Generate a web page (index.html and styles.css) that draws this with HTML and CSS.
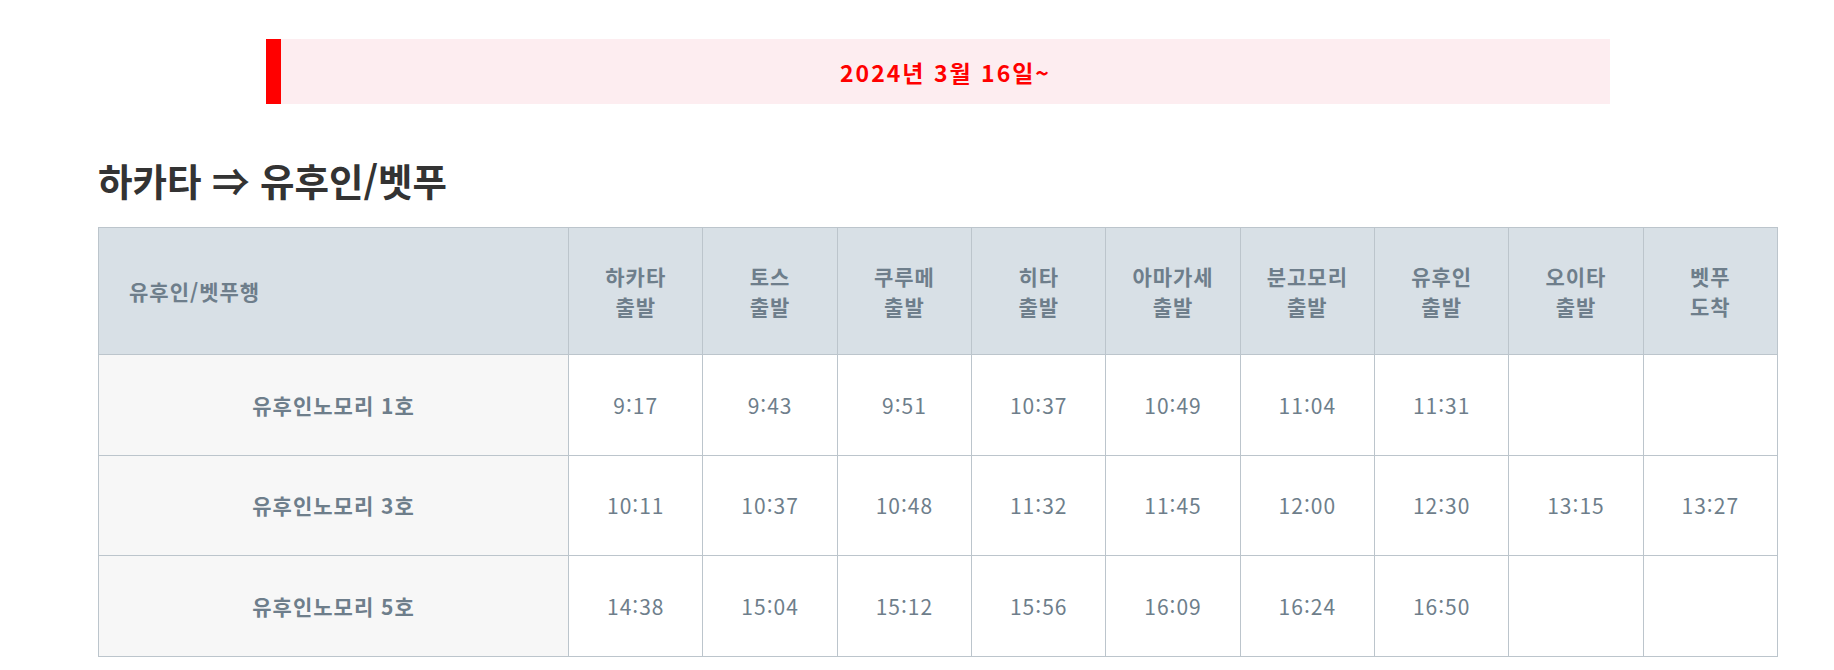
FILE: index.html
```html
<!DOCTYPE html>
<html lang="ko">
  <head>
    <meta charset="UTF-8" />
    <meta name="viewport" content="width=device-width, initial-scale=1.0" />
    <title>유후인노모리 시간표</title>
    <link rel="stylesheet" href="styles.css">
  </head>
  <body>
    <div class="container">
      <div class="notice">2024년 3월 16일~</div>

      <h2 class="route-title">하카타 ⇒ 유후인/벳푸</h2>

      <table class="timetable">
        <colgroup>
          <col class="col-train" />
          <col span="9" class="col-stop" />
        </colgroup>
        <thead>
          <tr>
            <th class="head-train">유후인/벳푸행</th>
            <th>하카타<br />출발</th>
            <th>토스<br />출발</th>
            <th>쿠루메<br />출발</th>
            <th>히타<br />출발</th>
            <th>아마가세<br />출발</th>
            <th>분고모리<br />출발</th>
            <th>유후인<br />출발</th>
            <th>오이타<br />출발</th>
            <th>벳푸<br />도착</th>
          </tr>
        </thead>
        <tbody>
          <tr>
            <td class="train-name">유후인노모리 1호</td>
            <td>9:17</td>
            <td>9:43</td>
            <td>9:51</td>
            <td>10:37</td>
            <td>10:49</td>
            <td>11:04</td>
            <td>11:31</td>
            <td></td>
            <td></td>
          </tr>
          <tr>
            <td class="train-name">유후인노모리 3호</td>
            <td>10:11</td>
            <td>10:37</td>
            <td>10:48</td>
            <td>11:32</td>
            <td>11:45</td>
            <td>12:00</td>
            <td>12:30</td>
            <td>13:15</td>
            <td>13:27</td>
          </tr>
          <tr>
            <td class="train-name">유후인노모리 5호</td>
            <td>14:38</td>
            <td>15:04</td>
            <td>15:12</td>
            <td>15:56</td>
            <td>16:09</td>
            <td>16:24</td>
            <td>16:50</td>
            <td></td>
            <td></td>
          </tr>
        </tbody>
      </table>
    </div>
  </body>
</html>
```

FILE: styles.css
```css
body {
  margin: 0;
  padding: 0;
  font-family: "Noto Sans CJK KR", "Noto Sans", sans-serif;
  background: #fff;
  color: #333;
}

.container {
  width: 1680px;
  margin-left: 98px;
  padding-top: 39px;
}

.notice {
  width: 80%;
  height: 65px;
  margin: 0 auto;
  box-sizing: border-box;
  display: flex;
  justify-content: center;
  align-items: center;
  background: #fdedf0;
  border-left: 15px solid #ff0000;
  color: #ff0000;
  font-size: 23px;
  font-weight: bold;
  letter-spacing: 2px;
}

.route-title {
  margin: 0;
  padding: 53px 0 25px;
  font-size: 37.5px;
  line-height: 1.2;
  font-weight: bold;
  color: #333;
}

.timetable {
  width: 100%;
  border-collapse: collapse;
  table-layout: fixed;
  border: 1px solid #bcc5cc;
}

.col-train {
  width: 28%;
}

.col-stop {
  width: 8%;
}

.timetable th,
.timetable td {
  border: 1px solid #bcc5cc;
  text-align: center;
  vertical-align: middle;
  color: #6e7e8b;
}

.timetable th {
  height: 126px;
  padding: 0;
  background: #d8e0e6;
  font-size: 21px;
  line-height: 30px;
  font-weight: bold;
  letter-spacing: 1px;
}

.timetable th.head-train {
  text-align: left;
  padding-left: 30px;
}

.timetable td {
  height: 99.5px;
  padding: 0;
  background: #fff;
  font-size: 21px;
  letter-spacing: 1px;
}

.timetable td.train-name {
  background: #f7f7f7;
  font-weight: bold;
  font-size: 21px;
  letter-spacing: 1px;
}
```
